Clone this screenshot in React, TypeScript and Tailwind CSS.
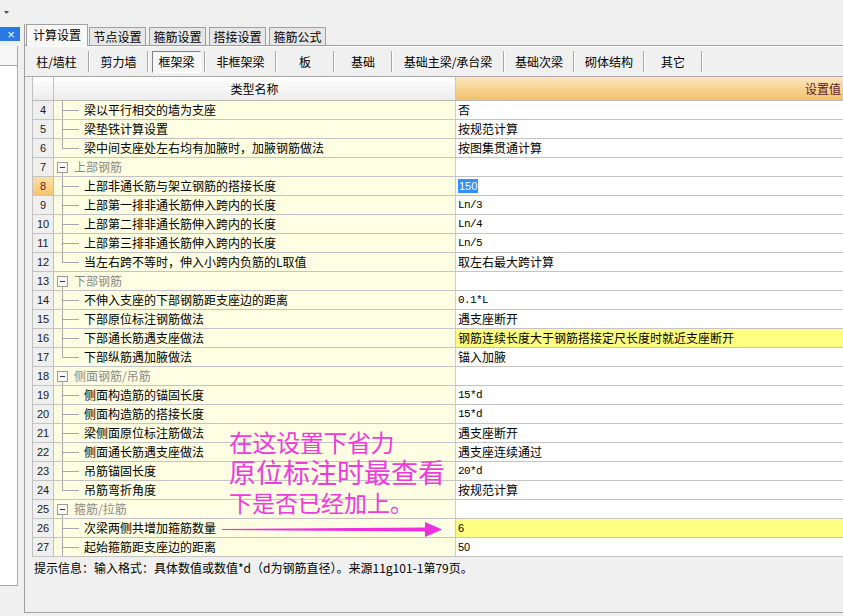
import React from "react";

type Row = {
  n: number;
  name: string;
  v?: string;
  group?: boolean;
  last?: boolean;
  mono?: boolean;
  sans?: boolean;
  sel?: boolean;
  hl?: boolean;
};

const rows: Row[] = [
  { n: 4, name: "梁以平行相交的墙为支座", v: "否" },
  { n: 5, name: "梁垫铁计算设置", v: "按规范计算" },
  { n: 6, name: "梁中间支座处左右均有加腋时，加腋钢筋做法", v: "按图集贯通计算", last: true },
  { n: 7, name: "上部钢筋", group: true },
  { n: 8, name: "上部非通长筋与架立钢筋的搭接长度", v: "150", sans: true, sel: true },
  { n: 9, name: "上部第一排非通长筋伸入跨内的长度", v: "Ln/3", mono: true },
  { n: 10, name: "上部第二排非通长筋伸入跨内的长度", v: "Ln/4", mono: true },
  { n: 11, name: "上部第三排非通长筋伸入跨内的长度", v: "Ln/5", mono: true },
  { n: 12, name: "当左右跨不等时，伸入小跨内负筋的L取值", v: "取左右最大跨计算", last: true },
  { n: 13, name: "下部钢筋", group: true },
  { n: 14, name: "不伸入支座的下部钢筋距支座边的距离", v: "0.1*L", mono: true },
  { n: 15, name: "下部原位标注钢筋做法", v: "遇支座断开" },
  { n: 16, name: "下部通长筋遇支座做法", v: "钢筋连续长度大于钢筋搭接定尺长度时就近支座断开", hl: true },
  { n: 17, name: "下部纵筋遇加腋做法", v: "锚入加腋", last: true },
  { n: 18, name: "侧面钢筋/吊筋", group: true },
  { n: 19, name: "侧面构造筋的锚固长度", v: "15*d", mono: true },
  { n: 20, name: "侧面构造筋的搭接长度", v: "15*d", mono: true },
  { n: 21, name: "梁侧面原位标注筋做法", v: "遇支座断开" },
  { n: 22, name: "侧面通长筋遇支座做法", v: "遇支座连续通过" },
  { n: 23, name: "吊筋锚固长度", v: "20*d", mono: true },
  { n: 24, name: "吊筋弯折角度", v: "按规范计算", last: true },
  { n: 25, name: "箍筋/拉筋", group: true },
  { n: 26, name: "次梁两侧共增加箍筋数量", v: "6", sans: true, hl: true },
  { n: 27, name: "起始箍筋距支座边的距离", v: "50", sans: true },
];

const subTabs: { label: string; w: string; active?: boolean }[] = [
  { label: "柱/墙柱", w: "w-[63px]" },
  { label: "剪力墙", w: "w-[57px]" },
  { label: "框架梁", w: "w-[55px]", active: true },
  { label: "非框架梁", w: "w-[69px]" },
  { label: "板", w: "w-[56px]" },
  { label: "基础", w: "w-[56px]" },
  { label: "基础主梁/承台梁", w: "w-[110px]" },
  { label: "基础次梁", w: "w-[68px]" },
  { label: "砌体结构", w: "w-[68px]" },
  { label: "其它", w: "w-[56px]" },
];

function Tree({ group, last }: { group?: boolean; last?: boolean }) {
  if (group)
    return (
      <svg width="20" height="18" className="shrink-0">
        <rect x="3.5" y="4.5" width="10" height="10" fill="#f8f8f8" stroke="#9c9c9c" />
        <line x1="6" y1="9.5" x2="11" y2="9.5" stroke="#3a3a3a" />
        <line x1="8.5" y1="14.5" x2="8.5" y2="18" stroke="#a8a8a8" />
      </svg>
    );
  return (
    <svg width="30" height="18" className="shrink-0">
      <line x1="8.5" y1="0" x2="8.5" y2={last ? 9.5 : 18} stroke="#a8a8a8" />
      <line x1="8.5" y1="9.5" x2="25" y2="9.5" stroke="#a8a8a8" />
    </svg>
  );
}

function Sep() {
  return (
    <div className="flex h-[21px] shrink-0">
      <div className="w-px bg-[#a8a8a8]" />
      <div className="w-px bg-white" />
    </div>
  );
}

export default function App() {
  return (
    <div className="relative w-[843px] h-[616px] overflow-hidden bg-[#f0f0f0] text-[12px] text-black font-['Noto_Sans_CJK_SC',sans-serif] flex flex-col">
      {/* top strip */}
      <div className="h-[24px] shrink-0 pl-[4px] pt-[11px]">
        <svg width="6" height="3">
          <polygon points="0,0 5,0 2.5,3" fill="#505050" />
        </svg>
      </div>

      <div className="flex flex-1 min-h-0">
        {/* left docked pane */}
        <div className="w-[20px] shrink-0 flex flex-col pt-[3px]">
          <div className="h-[14px] bg-[#2a78e4] flex items-center justify-center pl-[2px] text-white text-[13px] leading-none font-['Liberation_Sans',sans-serif]">
            ×
          </div>
          <div className="h-[5px]" />
          <div className="w-[18px] h-[20px] bg-[#f6f6f6] border-r border-b border-[#a8a8a8]" />
          <div className="w-[18px] h-[520px] bg-white border-r border-b border-[#a8a8a8]" />
        </div>
        <div className="w-[4px] shrink-0" />

        {/* main tab control */}
        <div className="flex-1 h-[589px] flex flex-col border-l border-b border-[#a0a0a0]">
          {/* tabs */}
          <div className="h-[22px] shrink-0 flex items-end border-b border-[#a0a0a0]">
            <div className="relative -mb-px ml-[1px] w-[62px] h-[22px] bg-[#f8f8f8] border border-b-0 border-[#a0a0a0] flex justify-center pt-[2px] leading-[16px]">
              计算设置
            </div>
            {["节点设置", "箍筋设置", "搭接设置", "箍筋公式"].map((t, i) => (
              <div
                key={t}
                className={`${i === 0 ? "ml-px" : "ml-[3px]"} w-[57px] h-[18px] bg-[#e6e6e6] border border-b-0 border-[#a0a0a0] flex justify-center leading-[17px]`}
              >
                {t}
              </div>
            ))}
          </div>

          {/* sub tabs */}
          <div className="h-[31px] shrink-0 flex items-center border-b border-[#a8a8a8] bg-[#f0f0f0] border-t border-t-white">
            {subTabs.map((s) => (
              <React.Fragment key={s.label}>
                <div className={`${s.w} shrink-0 h-[22px] flex items-center`}>
                  {s.active ? (
                    <div className="mx-[3px] flex-1 h-[22px] bg-[#f6f6f6] border border-[#808080] border-r-white border-b-white flex items-center justify-center">
                      {s.label}
                    </div>
                  ) : (
                    <div className="flex-1 text-center">{s.label}</div>
                  )}
                </div>
                <Sep />
              </React.Fragment>
            ))}
          </div>

          {/* grid */}
          <div className="pl-[7px] flex flex-col">
            {/* header */}
            <div className="h-[24px] flex border-b border-[#b8b8b8]">
              <div className="w-[22px] shrink-0 border-l border-r border-[#c0c0c0] bg-gradient-to-b from-white to-[#ececec]" />
              <div className="w-[402px] shrink-0 border-r border-[#c8c8c8] bg-gradient-to-b from-white to-[#ececec] flex items-center justify-center">
                类型名称
              </div>
              <div className="flex-1 bg-gradient-to-b from-[#fce7bd] to-[#f2c166] flex items-center pl-[349px] text-[#5e1a2a]">
                设置值
              </div>
            </div>

            {/* rows */}
            {rows.map((r) => (
              <div key={r.n} className="h-[19px] flex border-b border-[#c4c4c4] leading-[18px]">
                <div
                  className={`w-[22px] shrink-0 border-l border-r border-[#c0c0c0] text-center text-[11px] font-['Liberation_Sans',sans-serif] ${
                    r.sel ? "bg-gradient-to-b from-[#fde0a6] to-[#f6c46e] text-[#6a1a1a]" : "bg-[#efefef] text-[#202020]"
                  }`}
                >
                  {r.n}
                </div>
                <div className="w-[402px] shrink-0 border-r border-[#cfcfb8] bg-[#fefee3] flex items-center">
                  <Tree group={r.group} last={r.last} />
                  <span className={`whitespace-nowrap ${r.group ? "text-[#8a8a8a]" : ""}`}>{r.name}</span>
                </div>
                <div className={`flex-1 flex items-center pl-[2px] whitespace-nowrap ${r.hl ? "bg-[#ffff82]" : "bg-white"}`}>
                  {r.v && (
                    <span
                      className={`${r.mono ? "font-['Liberation_Mono','Noto_Sans_CJK_SC',monospace] text-[11px] tracking-[-0.6px]" : ""} ${
                        r.sans ? "font-['Liberation_Sans',sans-serif] text-[11px]" : ""
                      } ${r.sel ? "bg-[#3390ff] text-white px-px leading-[14px]" : ""}`}
                    >
                      {r.v}
                    </span>
                  )}
                </div>
              </div>
            ))}
          </div>

          {/* hint */}
          <div className="pl-[9px] mt-[2px] leading-[18px] whitespace-nowrap">
            提示信息：输入格式：具体数值或数值*d（d为钢筋直径）。来源11g101-1第79页。
          </div>
        </div>
      </div>

      {/* annotation overlay */}
      <div className="absolute left-[229px] top-[427px] text-[#ee3ade] whitespace-nowrap pointer-events-none flex flex-col">
        <div className="h-[30px] leading-[30px] text-[24px] tracking-[-0.4px]">在这设置下省力</div>
        <div className="h-[30px] leading-[30px] text-[27px]">原位标注时最查看</div>
        <div className="h-[30px] leading-[30px] text-[23px]">下是否已经加上。</div>
      </div>
      <svg className="absolute left-[220px] top-[518px]" width="226" height="24">
        <path d="M2 11 L205 9.5 L205 4 L222 11.5 L205 19 L205 13.5 L2 12 Z" fill="#ee2ee0" />
      </svg>
    </div>
  );
}
